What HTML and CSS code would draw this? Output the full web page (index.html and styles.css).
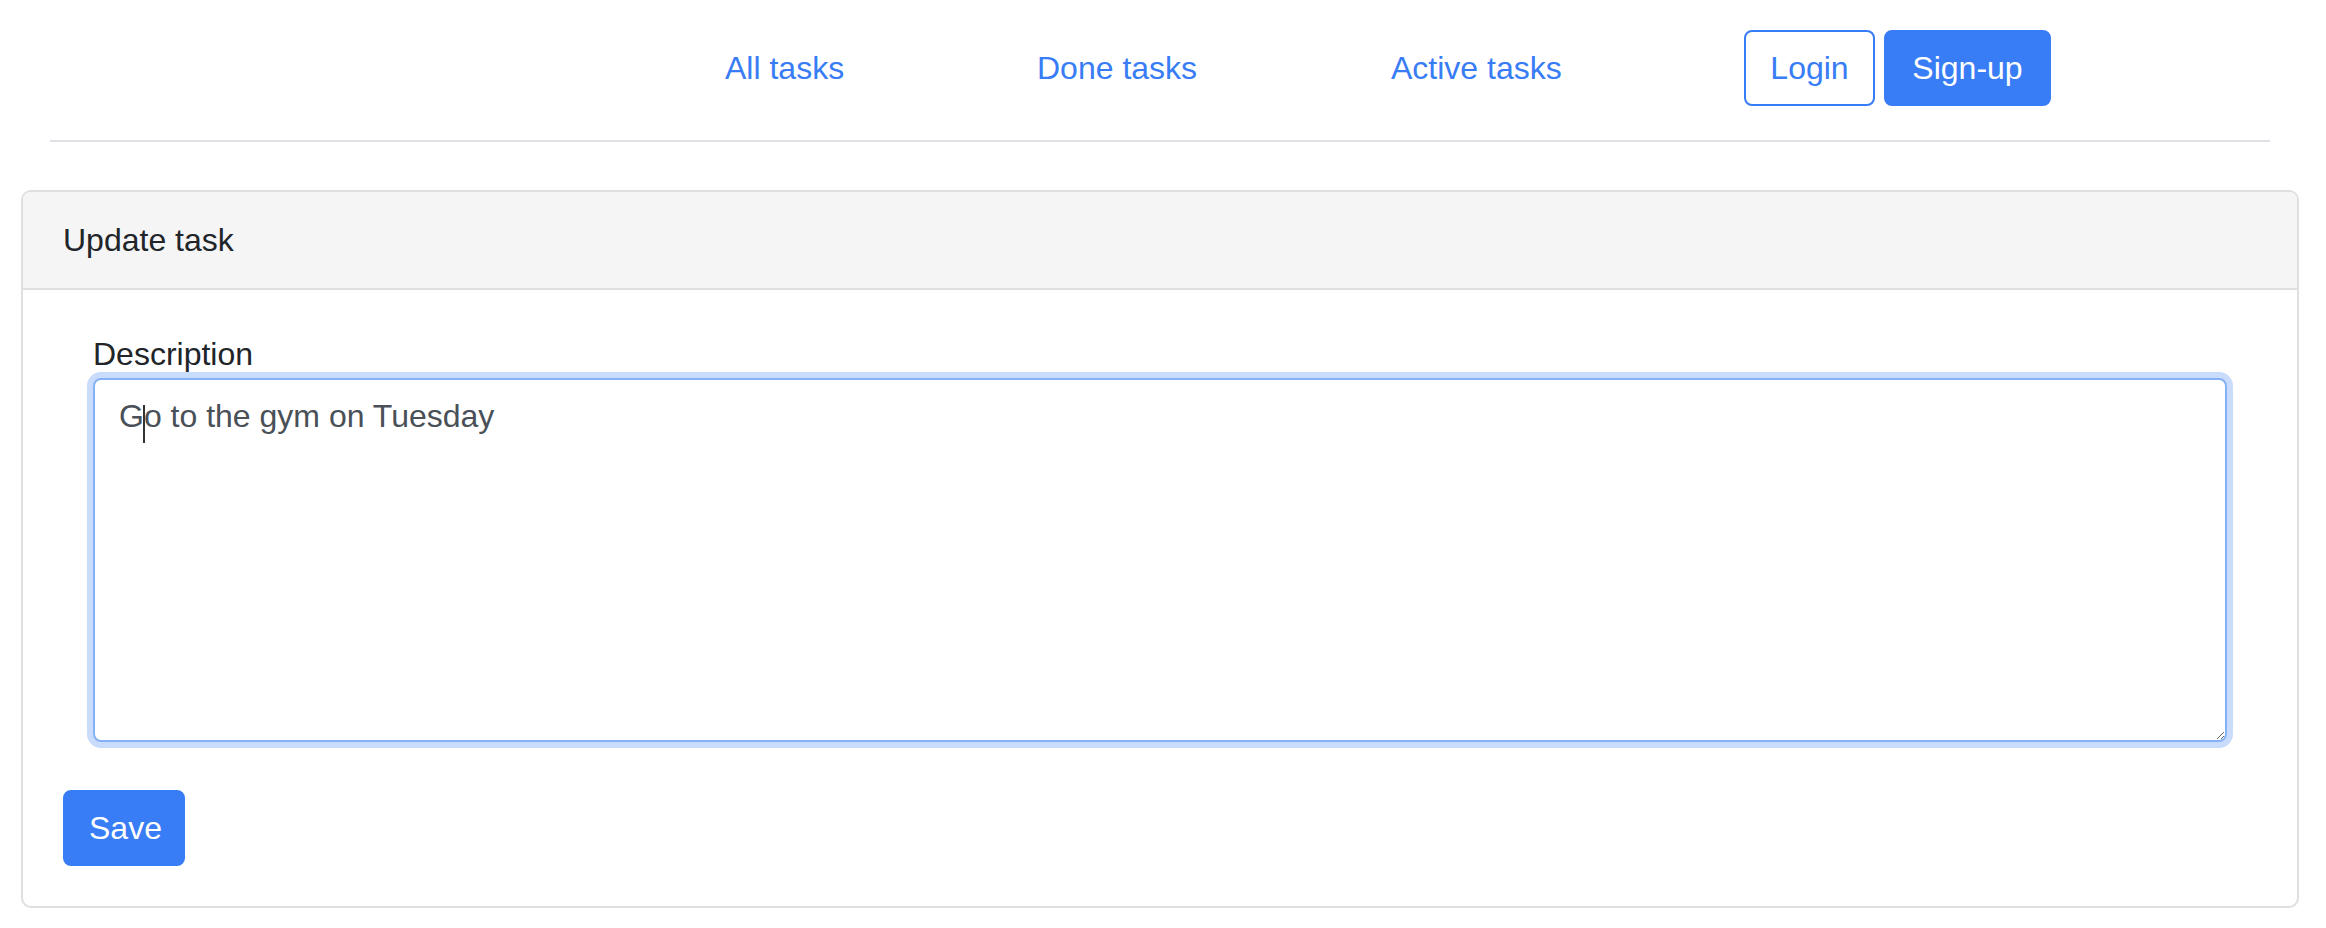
FILE: index.html
```html
<!DOCTYPE html>
<html lang="en">
<head>
<meta charset="utf-8">
<title>Update task</title>
<link rel="stylesheet" href="styles.css">
</head>
<body>
<header class="topbar">
  <nav class="nav">
    <a class="nav-link link-all" href="#">All tasks</a>
    <a class="nav-link link-done" href="#">Done tasks</a>
    <a class="nav-link link-active" href="#">Active tasks</a>
    <div class="auth">
      <button class="btn btn-outline">Login</button>
      <button class="btn btn-primary btn-signup">Sign-up</button>
    </div>
  </nav>
</header>
<main class="card">
  <div class="card-header">Update task</div>
  <div class="card-body">
    <div class="form-group">
      <label class="label" for="desc">Description</label>
      <div class="field">
        <textarea id="desc" class="form-control" rows="7">Go to the gym on Tuesday</textarea>
        <span class="caret"></span>
      </div>
    </div>
    <button class="btn btn-primary btn-save">Save</button>
  </div>
</main>
</body>
</html>
```
FILE: styles.css
```css
* { box-sizing: border-box; }
html, body { margin: 0; padding: 0; background: #fff; }
body {
  font-family: "Liberation Sans", Arial, sans-serif;
  font-size: 32px;
  line-height: 48px;
  color: #212529;
}
.topbar {
  margin: 0 56px 0 50px;
  padding: 30px 0 34px;
  border-bottom: 2px solid #dee2e6;
}
.nav {
  display: flex;
  align-items: center;
  padding-left: 675px;
}
.nav-link {
  color: #387cf6;
  text-decoration: none;
  flex: none;
}
.link-all { width: 312px; }
.link-done { width: 354px; }
.link-active { width: 353px; }
.auth { display: flex; gap: 9px; }
.btn {
  font-family: "Liberation Sans", Arial, sans-serif;
  font-size: 32px;
  line-height: 48px;
  height: 76px;
  padding: 0 24px;
  border-radius: 8px;
  border: 2px solid #387cf6;
  cursor: pointer;
}
.btn-outline { background: #fff; color: #387cf6; width: 131px; }
.btn-primary { background: #387cf6; color: #fff; }
.btn-signup { width: 167px; }
.card {
  display: block;
  margin: 48px 27px 0 21px;
  border: 2px solid #dfdfdf;
  border-radius: 10px;
  overflow: hidden;
}
.card-header {
  background: #f5f5f5;
  padding: 24px 40px;
  border-bottom: 2px solid #dfdfdf;
}
.card-body { padding: 40px; }
.form-group { padding: 0 30px; }
.label { display: block; }
.field { position: relative; }
.form-control {
  display: block;
  width: 100%;
  height: 364px;
  margin: 0;
  padding: 12px 24px;
  font-family: "Liberation Sans", Arial, sans-serif;
  font-size: 32px;
  line-height: 48px;
  color: #495057;
  background: #fff;
  border: 2px solid #86b1f7;
  border-radius: 8px;
  box-shadow: 0 0 0 6px #cadcfc;
  outline: none;
}
.caret {
  position: absolute;
  left: 50px;
  top: 27px;
  width: 2px;
  height: 38px;
  background: #333;
}
.btn-save {
  display: block;
  margin-top: 48px;
  width: 122px;
  border-color: #387cf6;
}
```
